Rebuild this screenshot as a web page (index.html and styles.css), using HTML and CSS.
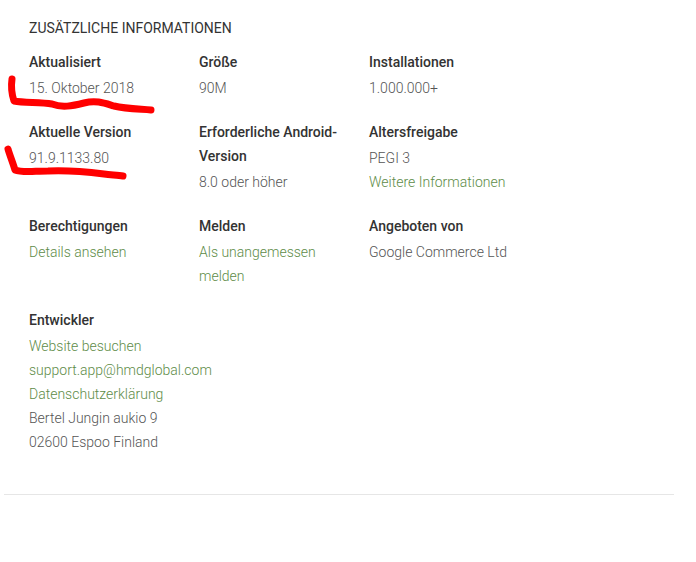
FILE: index.html
```html
<!DOCTYPE html>
<html lang="de">
  <head>
    <meta charset="utf-8" />
    <title>Zusätzliche Informationen</title>
    <link rel="stylesheet" href="styles.css">
  </head>
  <body>
    <section class="info">
      <h2 class="info-title">Zusätzliche Informationen</h2>
      <div class="info-grid">
        <div class="item">
          <div class="label">Aktualisiert</div>
          <div class="value">15. Oktober 2018</div>
        </div>
        <div class="item">
          <div class="label">Größe</div>
          <div class="value">90M</div>
        </div>
        <div class="item">
          <div class="label">Installationen</div>
          <div class="value">1.000.000+</div>
        </div>

        <div class="item">
          <div class="label">Aktuelle Version</div>
          <div class="value">91.9.1133.80</div>
        </div>
        <div class="item">
          <div class="label">Erforderliche Android-Version</div>
          <div class="value">8.0 oder höher</div>
        </div>
        <div class="item">
          <div class="label">Altersfreigabe</div>
          <div class="value">
            <div>PEGI 3</div>
            <a class="link" href="#">Weitere Informationen</a>
          </div>
        </div>

        <div class="item">
          <div class="label">Berechtigungen</div>
          <div class="value"><a class="link" href="#">Details ansehen</a></div>
        </div>
        <div class="item">
          <div class="label">Melden</div>
          <div class="value"><a class="link" href="#">Als unangemessen melden</a></div>
        </div>
        <div class="item">
          <div class="label">Angeboten von</div>
          <div class="value">Google Commerce Ltd</div>
        </div>

        <div class="item">
          <div class="label">Entwickler</div>
          <div class="value">
            <div><a class="link" href="#">Website besuchen</a></div>
            <div><a class="link" href="#">support.app@hmdglobal.com</a></div>
            <div><a class="link" href="#">Datenschutzerklärung</a></div>
            <div>Bertel Jungin aukio 9</div>
            <div>02600 Espoo Finland</div>
          </div>
        </div>
      </div>
    </section>
    <hr class="divider" />

    <!-- red marker scribbles drawn over the page -->
    <svg class="marks" width="696" height="200" viewBox="0 0 696 200">
      <path d="M12 79 C11 86 12 95 14 101 C24 103 40 102 52 104 C62 108 72 106 84 103 C96 100 104 103 114 106 C126 109 140 109 151 110" />
      <path d="M8 149 C10 156 13 163 15 170 C22 173 34 171 48 171 C68 170 88 172 104 174 C112 175 118 175 123 176" />
    </svg>
  </body>
</html>
```

FILE: styles.css
```css
body {
  margin: 0;
  background-color: #fff;
  font-family: Roboto, "Liberation Sans", sans-serif;
  font-size: 14px;
  line-height: 24px;
  color: #333;
}

.info {
  padding: 16px 29px 0;
}

.info-title {
  margin: 0 0 10px;
  font-size: 14px;
  font-weight: 400;
  line-height: 24px;
  text-transform: uppercase;
  color: #333;
}

.info-grid {
  display: grid;
  grid-template-columns: repeat(3, 170px);
  row-gap: 20px;
}

.item {
  padding-right: 24px;
}

.label {
  font-weight: 500;
  color: #333;
}

.value {
  margin-top: 2px;
  color: #555;
  font-weight: 300;
}

.link {
  color: #5e8c48;
  text-decoration: none;
}

.divider {
  margin: 40px 22px 0 4px;
  border: 0;
  border-top: 1px solid #e6e6e6;
}

.marks {
  position: absolute;
  left: 0;
  top: 0;
  pointer-events: none;
}

.marks path {
  fill: none;
  stroke: #f00;
  stroke-width: 7;
  stroke-linecap: round;
  stroke-linejoin: round;
}
```
